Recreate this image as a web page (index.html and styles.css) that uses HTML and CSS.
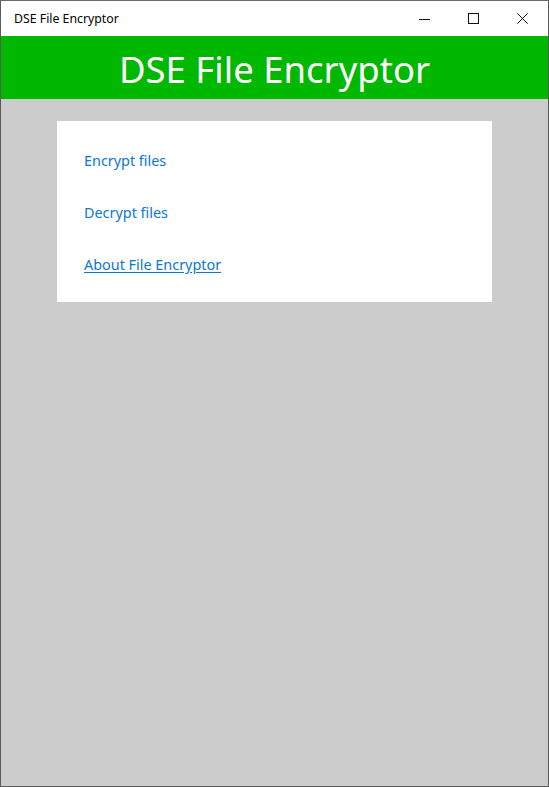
FILE: index.html
```html
<!DOCTYPE html>
<html>
<head>
<meta charset="utf-8">
<link rel="stylesheet" href="styles.css">
</head>
<body>
<div class="window">
  <div class="titlebar">
    <span class="title">DSE File Encryptor</span>
    <div class="controls">
      <span class="ctl"><svg width="11" height="11" viewBox="0 0 11 11"><path d="M0 6.5H11" stroke="#111" stroke-width="1"/></svg></span>
      <span class="ctl"><svg width="11" height="11" viewBox="0 0 11 11"><rect x="0.5" y="0.5" width="10" height="10" fill="none" stroke="#111" stroke-width="1"/></svg></span>
      <span class="ctl"><svg width="11" height="11" viewBox="0 0 11 11"><path d="M0.3 0.3L10.7 10.7M10.7 0.3L0.3 10.7" stroke="#111" stroke-width="1"/></svg></span>
    </div>
  </div>
  <header class="banner">DSE File Encryptor</header>
  <main class="content">
    <div class="card">
      <a class="link" href="#">Encrypt files</a>
      <a class="link" href="#">Decrypt files</a>
      <a class="link underline" href="#">About File Encryptor</a>
    </div>
  </main>
</div>
</body>
</html>
```
FILE: styles.css
```css
html, body {
  margin: 0;
  padding: 0;
  height: 100%;
}
body {
  font-family: "Noto Sans", "Open Sans", sans-serif;
}
.window {
  box-sizing: border-box;
  width: 549px;
  height: 787px;
  border: 1px solid #5a5a5a;
  border-top-color: #6a6a6a;
  display: flex;
  flex-direction: column;
  background: #cccccc;
}
.titlebar {
  height: 35px;
  background: #ffffff;
  display: flex;
  align-items: center;
  justify-content: space-between;
  flex: none;
}
.title {
  font-size: 12.3px;
  color: #000;
  padding-left: 13px;
  padding-bottom: 1px;
}
.controls {
  display: flex;
  height: 100%;
  padding-right: 1px;
}
.ctl {
  width: 49px;
  height: 100%;
  display: flex;
  align-items: center;
  justify-content: center;
}
.ctl svg {
  display: block;
}
.banner {
  height: 63px;
  flex: none;
  background: #00b800;
  color: #ffffff;
  font-size: 36.5px;
  display: flex;
  align-items: center;
  justify-content: center;
  padding-top: 2px;
  box-sizing: border-box;
}
.content {
  flex: 1;
  padding: 22px 0 0 56px;
}
.card {
  width: 435px;
  height: 181px;
  box-sizing: border-box;
  background: #ffffff;
  padding: 29px 0 0 27px;
  display: flex;
  flex-direction: column;
  align-items: flex-start;
  gap: 30px;
}
.link {
  font-size: 14.4px;
  line-height: 22px;
  color: #0a78d4;
  text-decoration: none;
}
.link.underline {
  text-decoration: underline;
  text-underline-offset: 2px;
}
```
